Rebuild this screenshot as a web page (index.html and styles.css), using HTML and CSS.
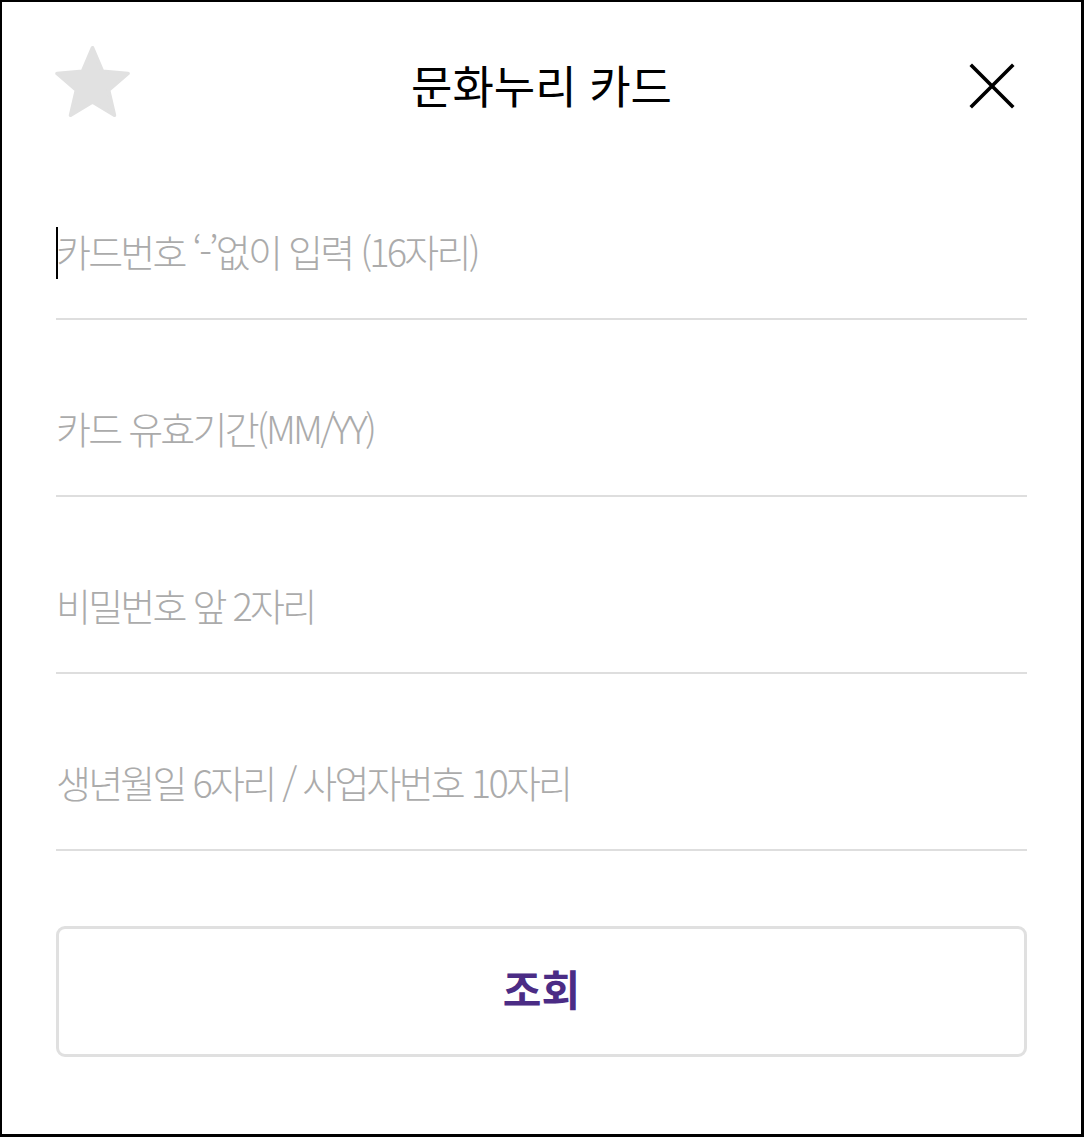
FILE: index.html
```html
<!DOCTYPE html>
<html lang="ko">
<head>
    <meta charset="UTF-8">
    <meta name="viewport" content="width=device-width, initial-scale=1.0">
    <title>문화누리 카드</title>
    <link rel="stylesheet" href="styles.css">
</head>
<body>
    <div class="popup">
        <div class="topo">
            <span class="estrela">
                <svg width="75" height="71" viewBox="1.5 1.5 21 20">
                    <path d="M12 17.27L18.18 21l-1.64-7.03L22 9.24l-7.19-.61L12 2 9.19 8.63 2 9.24l5.46 4.73L5.82 21z" fill="#e1e1e1" stroke="#e1e1e1" stroke-width="1" stroke-linejoin="round"/>
                </svg>
            </span>
            <h1 class="titulo">문화누리 카드</h1>
            <button class="fechar" type="button">
                <svg width="46" height="46" viewBox="0 0 46 46">
                    <path d="M3 3L43 43M43 3L3 43" stroke="#000" stroke-width="3.6" stroke-linecap="square"/>
                </svg>
            </button>
        </div>

        <form class="campos">
            <div class="campo">
                <span class="cursor"></span>
                <input type="text" placeholder="카드번호 ‘-’없이 입력 (16자리)">
            </div>
            <div class="campo">
                <input type="text" placeholder="카드 유효기간(MM/YY)">
            </div>
            <div class="campo">
                <input type="password" placeholder="비밀번호 앞 2자리">
            </div>
            <div class="campo">
                <input type="text" placeholder="생년월일 6자리 / 사업자번호 10자리">
            </div>
            <button class="consultar" type="button">조회</button>
        </form>
    </div>
</body>
</html>
```

FILE: styles.css
```css
* {
    box-sizing: border-box;
}

html, body {
    margin: 0;
    height: 100%;
}

body {
    font-family: "Noto Sans CJK KR", "Noto Sans", sans-serif;
    background-color: #fff;
}

.popup {
    height: 100%;
    border-style: solid;
    border-color: #000;
    border-width: 2px 3px 3px 2px;
}

.topo {
    height: 141px;
    padding: 40px 53px 13px 53px;
    display: flex;
    align-items: center;
    justify-content: space-between;
    position: relative;
}

.estrela {
    display: block;
    width: 75px;
    height: 71px;
    margin-bottom: 9px;
}

.estrela svg {
    display: block;
}

.titulo {
    position: absolute;
    left: 0;
    right: 0;
    top: 38px;
    height: 88px;
    margin: 0;
    display: flex;
    align-items: center;
    justify-content: center;
    font-size: 45px;
    font-weight: 400;
    color: #000;
    pointer-events: none;
}

.fechar {
    width: 46px;
    height: 46px;
    padding: 0;
    margin-right: 13px;
    border: none;
    background: none;
    cursor: pointer;
}

.fechar svg {
    display: block;
}

.campos {
    margin: 0;
    padding: 0 54px;
}

.campo {
    position: relative;
    height: 177px;
    padding-bottom: 38px;
    display: flex;
    align-items: flex-end;
    border-bottom: 2px solid #dedede;
}

.campo input {
    width: 100%;
    height: 60px;
    padding: 0;
    border: none;
    outline: none;
    background: transparent;
    font-family: "Noto Sans CJK KR", "Noto Sans", sans-serif;
    font-size: 38px;
    font-weight: 300;
    letter-spacing: -2.8px;
    color: #333;
}

.campo input::placeholder {
    color: #ababab;
    opacity: 1;
}

.cursor {
    position: absolute;
    left: 0;
    bottom: 39px;
    width: 2px;
    height: 52px;
    background-color: #000;
}

.consultar {
    display: block;
    width: 100%;
    height: 131px;
    margin-top: 75px;
    padding: 0 0 8px;
    background-color: #fff;
    border: 3px solid #e0e0e0;
    border-radius: 9px;
    font-family: "Noto Sans CJK KR", "Noto Sans", sans-serif;
    font-size: 42px;
    font-weight: 700;
    color: #4b2c85;
    cursor: pointer;
}
```
